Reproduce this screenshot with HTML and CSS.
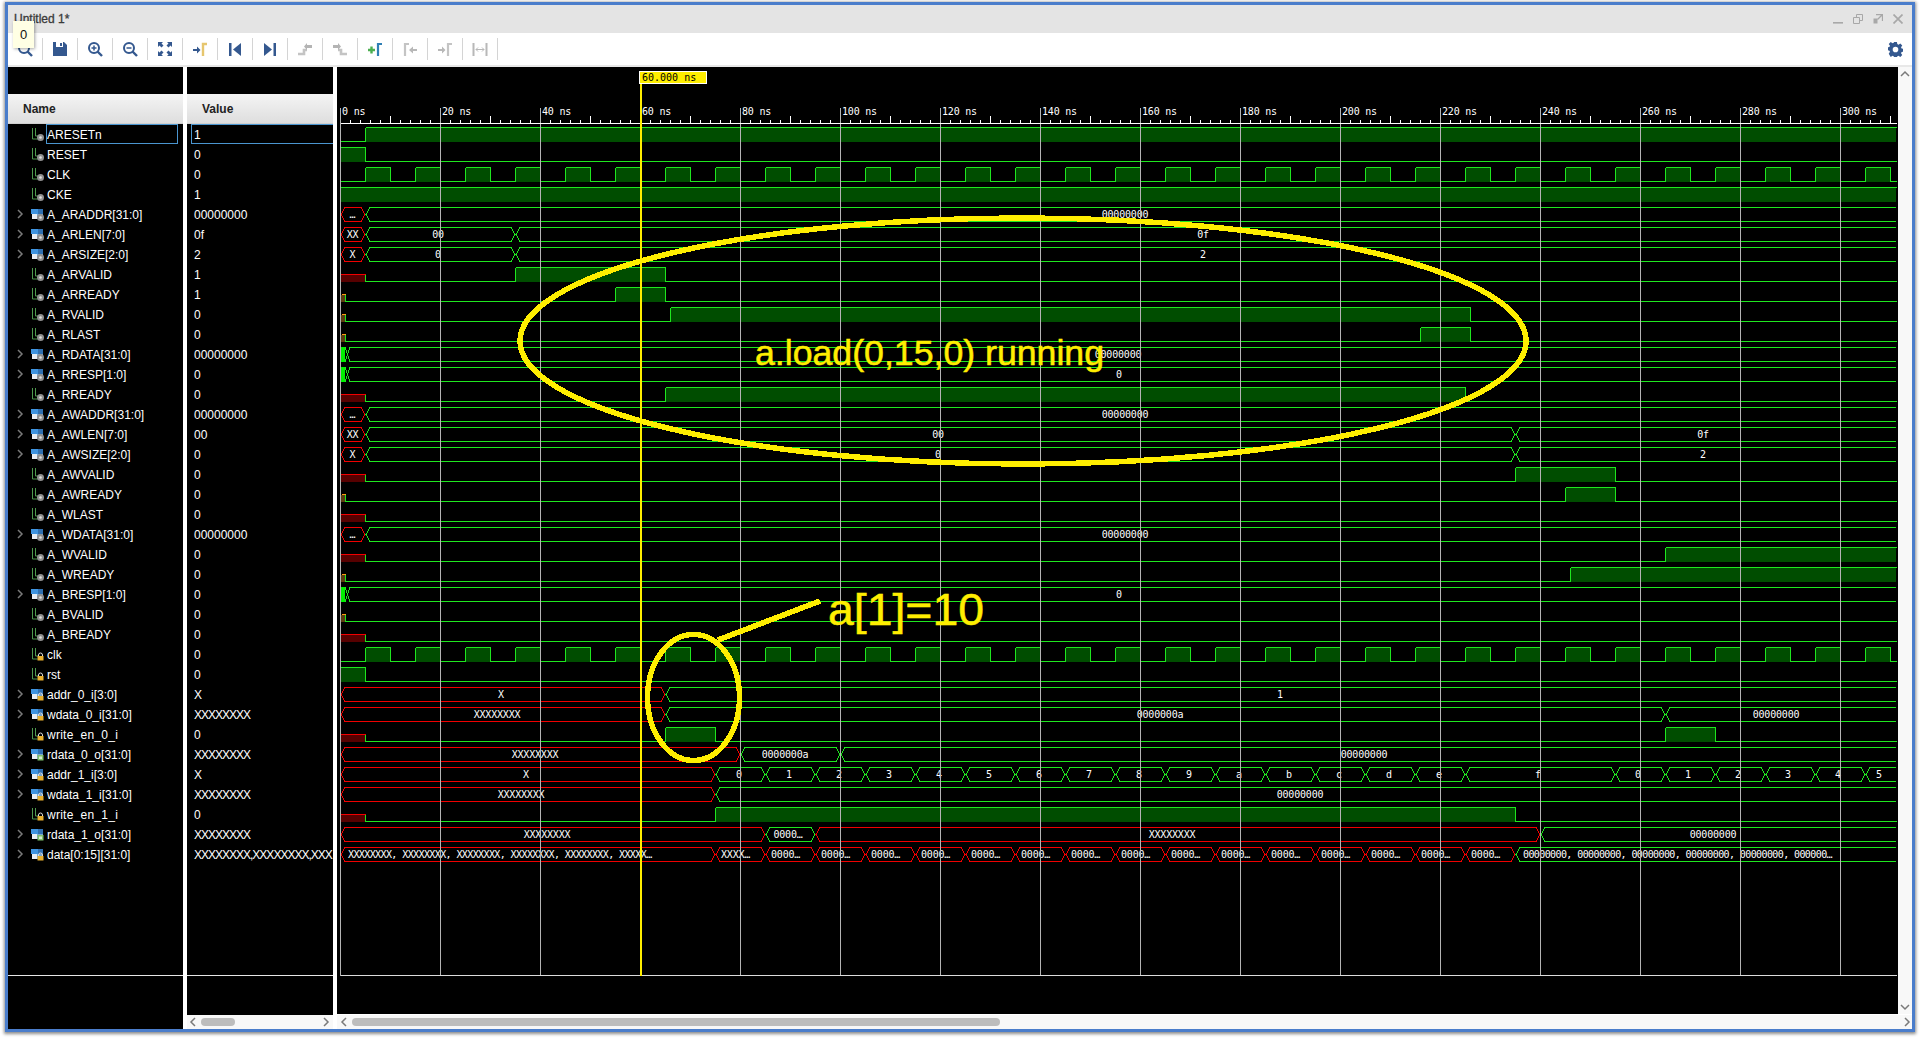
FILE: index.html
```html
<!DOCTYPE html>
<html lang="en">
<head>
<meta charset="utf-8">
<title>Untitled 1*</title>
<link rel="stylesheet" href="styles.css">
</head>
<body>
<svg class="defs" aria-hidden="true">
  <symbol id="badge-g" viewBox="0 0 16 16"><circle cx="9.500" cy="10.500" r="3.500" fill="#8f8f8f"/><circle cx="9.500" cy="10.500" r="1.300" fill="#e0e0e0"/></symbol>
  <symbol id="badge-l" viewBox="0 0 16 16"><path d="M7.500 9V8a2 2 0 0 1 4 0v1" fill="none" stroke="#ddd" stroke-width="1"/><rect x="6.500" y="9" width="6" height="4.500" fill="#e8b030"/></symbol>
  <symbol id="badge-o" viewBox="0 0 16 16"><rect x="6.500" y="8" width="6" height="5.500" fill="#7fbf6a"/><rect x="8" y="9.500" width="3" height="2.500" fill="#d5ecd0"/></symbol>
  <symbol id="trace" viewBox="0 0 16 16"><path d="M1.500 1v11h5M4.500 1v8h3" fill="none" stroke="#4f9a4f" stroke-width="1"/></symbol>
  <symbol id="bus" viewBox="0 0 16 16"><rect x="0" y="2" width="7" height="5" fill="#3f94e0"/><rect x="7" y="2" width="5" height="5" fill="#2f6fb0"/><rect x="1" y="7" width="5" height="5" fill="#e8eef5"/><rect x="6" y="7" width="6" height="5" fill="#7aa8d0"/></symbol>
  <symbol id="chev" viewBox="0 0 10 10"><path d="M3 1l4 4-4 4" fill="none" stroke="#7a7a7a" stroke-width="1.500"/></symbol>
  <symbol id="chev-l" viewBox="0 0 10 10"><path d="M7 1L3 5l4 4" fill="none" stroke="#7a7a7a" stroke-width="1.500"/></symbol>
  <symbol id="chev-u" viewBox="0 0 10 10"><path d="M1 7l4-4 4 4" fill="none" stroke="#7a7a7a" stroke-width="1.500"/></symbol>
  <symbol id="chev-d" viewBox="0 0 10 10"><path d="M1 3l4 4 4-4" fill="none" stroke="#7a7a7a" stroke-width="1.500"/></symbol>
</svg>

<div class="window">
  <div class="titlebar">
    <span class="title">Untitled 1*</span>
    <div class="win-btns">
      <svg class="win-ico" viewBox="0 0 10 10"><rect x="0" y="8" width="10" height="1.600" fill="#a8a8a8"/></svg>
      <svg class="win-ico" viewBox="0 0 10 10"><path d="M3.500 3V.5h6v6H7M.5 3.500h6v6h-6z" fill="none" stroke="#a8a8a8"/></svg>
      <svg class="win-ico" viewBox="0 0 10 10"><path d="M3 .5h6.500V7M9 1L4.500 5.500" fill="none" stroke="#a8a8a8" stroke-width="1.300"/><path d="M.5 4.500h4v5h-4z" fill="#a8a8a8"/></svg>
      <svg class="win-ico" viewBox="0 0 10 10"><path d="M.5.5l9 9M9.500.5l-9 9" fill="none" stroke="#a8a8a8" stroke-width="1.700"/></svg>
    </div>
  </div>

  <div class="toolbar">
    <div class="tool"><svg class="tb" viewBox="0 0 16 16"><circle cx="7" cy="7" r="5" fill="none" stroke="#34588f" stroke-width="2"/><path d="M10.500 10.500l4.500 4.500" stroke="#34588f" stroke-width="2.400"/></svg></div>
    <div class="tool"><svg class="tb" viewBox="0 0 16 16"><path d="M1 1h11l3 3v11H1z" fill="#34588f"/><rect x="4" y="1" width="7" height="5" fill="#fff"/><rect x="8" y="2" width="2" height="3" fill="#34588f"/></svg></div>
    <div class="tool"><svg class="tb" viewBox="0 0 16 16"><circle cx="7" cy="7" r="5" fill="none" stroke="#34588f" stroke-width="2"/><path d="M4.500 7h5M7 4.500v5" stroke="#34588f" stroke-width="1.500"/><path d="M10.500 10.500l4.500 4.500" stroke="#34588f" stroke-width="2.400"/></svg></div>
    <div class="tool"><svg class="tb" viewBox="0 0 16 16"><circle cx="7" cy="7" r="5" fill="none" stroke="#34588f" stroke-width="2"/><path d="M4.500 7h5" stroke="#34588f" stroke-width="1.500"/><path d="M10.500 10.500l4.500 4.500" stroke="#34588f" stroke-width="2.400"/></svg></div>
    <div class="tool"><svg class="tb" viewBox="0 0 16 16"><path d="M1 1h5L4.500 2.500 6.500 4.500 4.500 6.500 2.500 4.500 1 6zM15 1v5L13.500 4.500 11.500 6.500 9.500 4.500 11.500 2.500 10 1zM1 15v-5L2.500 11.500 4.500 9.500 6.500 11.500 4.500 13.500 6 15zM15 15h-5L11.500 13.500 9.500 11.500 11.500 9.500 13.500 11.500 15 10z" fill="#34588f"/></svg></div>
    <div class="tool"><svg class="tb" viewBox="0 0 16 16"><path d="M1 8h4V5.500L8.500 9 5 12.500V10H1z" fill="#34588f"/><path d="M11 15V3h4" fill="none" stroke="#e6c66e" stroke-width="2.400"/></svg></div>
    <div class="tool"><svg class="tb" viewBox="0 0 16 16"><rect x="2" y="2" width="2.500" height="13" fill="#34588f"/><path d="M14 2v13L6 8.500z" fill="#34588f"/></svg></div>
    <div class="tool"><svg class="tb" viewBox="0 0 16 16"><rect x="11.500" y="2" width="2.500" height="13" fill="#34588f"/><path d="M2 2v13l8-6.500z" fill="#34588f"/></svg></div>
    <div class="tool"><svg class="tb" viewBox="0 0 16 16"><path d="M1 13h6V9h3" fill="none" stroke="#c4c4c4" stroke-width="2.600"/><path d="M10 4h5v3h-5v2L7 5.500 10 2z" fill="#b4b4b4"/></svg></div>
    <div class="tool"><svg class="tb" viewBox="0 0 16 16"><path d="M15 13H9V9H6" fill="none" stroke="#c4c4c4" stroke-width="2.600"/><path d="M1 4h5V2l3 3.500L6 9V7H1z" fill="#b4b4b4"/></svg></div>
    <div class="tool"><svg class="tb" viewBox="0 0 16 16"><path d="M1 9h7M4.500 5.500v7" stroke="#4caf50" stroke-width="2.400"/><path d="M11 15V3h4" fill="none" stroke="#2f7fb5" stroke-width="2.200"/></svg></div>
    <div class="tool"><svg class="tb" viewBox="0 0 16 16"><path d="M3 15V3h4" fill="none" stroke="#c4c4c4" stroke-width="2.200"/><path d="M15 8h-4V5.500L7 9l4 3.500V10h4z" fill="#b8b8b8"/></svg></div>
    <div class="tool"><svg class="tb" viewBox="0 0 16 16"><path d="M1 8h4V5.500L8.500 9 5 12.500V10H1z" fill="#b8b8b8"/><path d="M11 15V3h4" fill="none" stroke="#c4c4c4" stroke-width="2.200"/></svg></div>
    <div class="tool"><svg class="tb" viewBox="0 0 16 16"><path d="M1.500 2v13M14.500 2v13" stroke="#b8b8b8" stroke-width="2"/><path d="M4 8.500h8M6 6.500L4 8.500l2 2M10 6.500l2 2-2 2" fill="none" stroke="#b8b8b8"/></svg></div>
    <svg class="gear" viewBox="0 0 16 16"><path fill-rule="evenodd" d="M6.500 0h3l.4 2.200 1.300.6L13.100 1.500l2.100 2.100-1.300 1.900.6 1.300 2.200.4v3l-2.200.4-.6 1.300 1.300 1.900-2.100 2.100-1.900-1.300-1.300.6-.4 2.200h-3l-.4-2.200-1.300-.6-1.900 1.300L.8 12.400l1.300-1.900-.6-1.300L-.7 8.800v-3l2.200-.4.600-1.300L.8 2.200 2.900.1l1.900 1.300 1.300-.6zM8 5a2.500 2.500 0 1 0 0 6 2.500 2.500 0 0 0 0-6z" fill="#34588f"/></svg>
  </div>

  <div class="tooltip">0</div>

  <div class="panes">
    <div class="col col-name">
      <div class="spacer"></div>
      <div class="head">Name</div>
      <div class="rows">
        <div class="row sel"><span class="exp"></span><span class="ic"><svg><use href="#trace"/></svg><svg><use href="#badge-g"/></svg></span><span class="name">ARESETn</span></div>
        <div class="row"><span class="exp"></span><span class="ic"><svg><use href="#trace"/></svg><svg><use href="#badge-g"/></svg></span><span class="name">RESET</span></div>
        <div class="row"><span class="exp"></span><span class="ic"><svg><use href="#trace"/></svg><svg><use href="#badge-g"/></svg></span><span class="name">CLK</span></div>
        <div class="row"><span class="exp"></span><span class="ic"><svg><use href="#trace"/></svg><svg><use href="#badge-g"/></svg></span><span class="name">CKE</span></div>
        <div class="row"><svg class="exp"><use href="#chev"/></svg><span class="ic"><svg><use href="#bus"/></svg><svg><use href="#badge-g"/></svg></span><span class="name">A_ARADDR[31:0]</span></div>
        <div class="row"><svg class="exp"><use href="#chev"/></svg><span class="ic"><svg><use href="#bus"/></svg><svg><use href="#badge-g"/></svg></span><span class="name">A_ARLEN[7:0]</span></div>
        <div class="row"><svg class="exp"><use href="#chev"/></svg><span class="ic"><svg><use href="#bus"/></svg><svg><use href="#badge-g"/></svg></span><span class="name">A_ARSIZE[2:0]</span></div>
        <div class="row"><span class="exp"></span><span class="ic"><svg><use href="#trace"/></svg><svg><use href="#badge-g"/></svg></span><span class="name">A_ARVALID</span></div>
        <div class="row"><span class="exp"></span><span class="ic"><svg><use href="#trace"/></svg><svg><use href="#badge-g"/></svg></span><span class="name">A_ARREADY</span></div>
        <div class="row"><span class="exp"></span><span class="ic"><svg><use href="#trace"/></svg><svg><use href="#badge-g"/></svg></span><span class="name">A_RVALID</span></div>
        <div class="row"><span class="exp"></span><span class="ic"><svg><use href="#trace"/></svg><svg><use href="#badge-g"/></svg></span><span class="name">A_RLAST</span></div>
        <div class="row"><svg class="exp"><use href="#chev"/></svg><span class="ic"><svg><use href="#bus"/></svg><svg><use href="#badge-g"/></svg></span><span class="name">A_RDATA[31:0]</span></div>
        <div class="row"><svg class="exp"><use href="#chev"/></svg><span class="ic"><svg><use href="#bus"/></svg><svg><use href="#badge-g"/></svg></span><span class="name">A_RRESP[1:0]</span></div>
        <div class="row"><span class="exp"></span><span class="ic"><svg><use href="#trace"/></svg><svg><use href="#badge-g"/></svg></span><span class="name">A_RREADY</span></div>
        <div class="row"><svg class="exp"><use href="#chev"/></svg><span class="ic"><svg><use href="#bus"/></svg><svg><use href="#badge-g"/></svg></span><span class="name">A_AWADDR[31:0]</span></div>
        <div class="row"><svg class="exp"><use href="#chev"/></svg><span class="ic"><svg><use href="#bus"/></svg><svg><use href="#badge-g"/></svg></span><span class="name">A_AWLEN[7:0]</span></div>
        <div class="row"><svg class="exp"><use href="#chev"/></svg><span class="ic"><svg><use href="#bus"/></svg><svg><use href="#badge-g"/></svg></span><span class="name">A_AWSIZE[2:0]</span></div>
        <div class="row"><span class="exp"></span><span class="ic"><svg><use href="#trace"/></svg><svg><use href="#badge-g"/></svg></span><span class="name">A_AWVALID</span></div>
        <div class="row"><span class="exp"></span><span class="ic"><svg><use href="#trace"/></svg><svg><use href="#badge-g"/></svg></span><span class="name">A_AWREADY</span></div>
        <div class="row"><span class="exp"></span><span class="ic"><svg><use href="#trace"/></svg><svg><use href="#badge-g"/></svg></span><span class="name">A_WLAST</span></div>
        <div class="row"><svg class="exp"><use href="#chev"/></svg><span class="ic"><svg><use href="#bus"/></svg><svg><use href="#badge-g"/></svg></span><span class="name">A_WDATA[31:0]</span></div>
        <div class="row"><span class="exp"></span><span class="ic"><svg><use href="#trace"/></svg><svg><use href="#badge-g"/></svg></span><span class="name">A_WVALID</span></div>
        <div class="row"><span class="exp"></span><span class="ic"><svg><use href="#trace"/></svg><svg><use href="#badge-g"/></svg></span><span class="name">A_WREADY</span></div>
        <div class="row"><svg class="exp"><use href="#chev"/></svg><span class="ic"><svg><use href="#bus"/></svg><svg><use href="#badge-g"/></svg></span><span class="name">A_BRESP[1:0]</span></div>
        <div class="row"><span class="exp"></span><span class="ic"><svg><use href="#trace"/></svg><svg><use href="#badge-g"/></svg></span><span class="name">A_BVALID</span></div>
        <div class="row"><span class="exp"></span><span class="ic"><svg><use href="#trace"/></svg><svg><use href="#badge-g"/></svg></span><span class="name">A_BREADY</span></div>
        <div class="row"><span class="exp"></span><span class="ic"><svg><use href="#trace"/></svg><svg><use href="#badge-l"/></svg></span><span class="name">clk</span></div>
        <div class="row"><span class="exp"></span><span class="ic"><svg><use href="#trace"/></svg><svg><use href="#badge-l"/></svg></span><span class="name">rst</span></div>
        <div class="row"><svg class="exp"><use href="#chev"/></svg><span class="ic"><svg><use href="#bus"/></svg><svg><use href="#badge-l"/></svg></span><span class="name">addr_0_i[3:0]</span></div>
        <div class="row"><svg class="exp"><use href="#chev"/></svg><span class="ic"><svg><use href="#bus"/></svg><svg><use href="#badge-l"/></svg></span><span class="name">wdata_0_i[31:0]</span></div>
        <div class="row"><span class="exp"></span><span class="ic"><svg><use href="#trace"/></svg><svg><use href="#badge-l"/></svg></span><span class="name wide">write_en_0_i</span></div>
        <div class="row"><svg class="exp"><use href="#chev"/></svg><span class="ic"><svg><use href="#bus"/></svg><svg><use href="#badge-o"/></svg></span><span class="name">rdata_0_o[31:0]</span></div>
        <div class="row"><svg class="exp"><use href="#chev"/></svg><span class="ic"><svg><use href="#bus"/></svg><svg><use href="#badge-l"/></svg></span><span class="name">addr_1_i[3:0]</span></div>
        <div class="row"><svg class="exp"><use href="#chev"/></svg><span class="ic"><svg><use href="#bus"/></svg><svg><use href="#badge-l"/></svg></span><span class="name">wdata_1_i[31:0]</span></div>
        <div class="row"><span class="exp"></span><span class="ic"><svg><use href="#trace"/></svg><svg><use href="#badge-l"/></svg></span><span class="name wide">write_en_1_i</span></div>
        <div class="row"><svg class="exp"><use href="#chev"/></svg><span class="ic"><svg><use href="#bus"/></svg><svg><use href="#badge-o"/></svg></span><span class="name">rdata_1_o[31:0]</span></div>
        <div class="row"><svg class="exp"><use href="#chev"/></svg><span class="ic"><svg><use href="#bus"/></svg><svg><use href="#badge-l"/></svg></span><span class="name">data[0:15][31:0]</span></div>
      </div>
      <div class="foot"></div>
    </div>

    <div class="sep"></div>

    <div class="col col-value">
      <div class="spacer"></div>
      <div class="head">Value</div>
      <div class="rows">
        <div class="val sel">1</div>
        <div class="val">0</div>
        <div class="val">0</div>
        <div class="val">1</div>
        <div class="val">00000000</div>
        <div class="val">0f</div>
        <div class="val">2</div>
        <div class="val">1</div>
        <div class="val">1</div>
        <div class="val">0</div>
        <div class="val">0</div>
        <div class="val">00000000</div>
        <div class="val">0</div>
        <div class="val">0</div>
        <div class="val">00000000</div>
        <div class="val">00</div>
        <div class="val">0</div>
        <div class="val">0</div>
        <div class="val">0</div>
        <div class="val">0</div>
        <div class="val">00000000</div>
        <div class="val">0</div>
        <div class="val">0</div>
        <div class="val">0</div>
        <div class="val">0</div>
        <div class="val">0</div>
        <div class="val">0</div>
        <div class="val">0</div>
        <div class="val xs">X</div>
        <div class="val xs">XXXXXXXX</div>
        <div class="val">0</div>
        <div class="val xs">XXXXXXXX</div>
        <div class="val xs">X</div>
        <div class="val xs">XXXXXXXX</div>
        <div class="val">0</div>
        <div class="val xs">XXXXXXXX</div>
        <div class="val xs">XXXXXXXX,XXXXXXXX,XXX</div>
      </div>
      <div class="foot foot-short"></div>
      <div class="hbar">
        <svg class="arrow"><use href="#chev-l"/></svg>
        <div class="thumb thumb-val"></div>
        <svg class="arrow arrow-end"><use href="#chev"/></svg>
      </div>
    </div>

    <div class="sep"></div>

    <div class="col col-wave">
      <div class="wave-main">
        <svg id="wave" class="wave" viewBox="337 67 1561 947"></svg>
        <div class="vbar">
          <svg class="arrow"><use href="#chev-u"/></svg>
          <svg class="arrow"><use href="#chev-d"/></svg>
        </div>
      </div>
      <div class="hbar hbar-wave">
        <svg class="arrow"><use href="#chev-l"/></svg>
        <div class="thumb thumb-wave"></div>
        <svg class="arrow arrow-end"><use href="#chev"/></svg>
      </div>
    </div>
  </div>
</div>
<script src="wave.js"></script>
</body>
</html>
```
FILE: styles.css
```css
* { box-sizing: border-box; }
html, body { margin: 0; padding: 0; height: 100%; background: #fff; overflow: hidden; }
body { font-family: "Liberation Sans", Arial, sans-serif; font-size: 12px; }
.defs { position: absolute; width: 0; height: 0; }

.window {
  position: relative;
  margin: 2px 5px 0 5px;
  width: 1910px;
  height: 1030px;
  border: 3px solid #4a7dcb;
  box-shadow: 0 1px 3px 1px rgba(0, 0, 0, .45);
  display: flex;
  flex-direction: column;
  background: #fff;
}

.titlebar {
  height: 28px;
  background: #e4e4e4;
  display: flex;
  align-items: center;
  justify-content: space-between;
  padding: 0 9px 0 6px;
}
.title { color: #3a3a3a; font-size: 12px; font-weight: normal; -webkit-text-stroke: .3px #3a3a3a; }
.win-btns { display: flex; gap: 10px; align-items: center; }
.win-ico { width: 10px; height: 10px; display: block; }

.toolbar {
  height: 34px;
  background: #fff;
  border-bottom: 2px solid #e8e8e8;
  display: flex;
  align-items: center;
}
.tool {
  width: 35px;
  height: 22px;
  border-right: 1px solid #d4d4d4;
  display: flex;
  align-items: center;
  justify-content: center;
  flex: none;
}
.tb { width: 16px; height: 16px; display: block; }
.gear { width: 15px; height: 15px; margin-left: auto; margin-right: 9px; display: block; }

.tooltip {
  position: absolute;
  left: 5px;
  top: 16px;
  width: 21px;
  height: 27px;
  background: #ffffe4;
  box-shadow: 1px 1px 3px rgba(0, 0, 0, .35);
  display: flex;
  align-items: center;
  justify-content: center;
  font-size: 13px;
  color: #111;
}

.panes { flex: 1; display: flex; background: #fff; min-height: 0; }
.sep { width: 4px; flex: none; background: #fff; }
.col { display: flex; flex-direction: column; background: #000; flex: none; }
.col-name { width: 175px; }
.col-value { width: 146px; }
.col-wave { flex: 1; min-width: 0; background: #f8f8f8; }

.spacer { height: 27px; flex: none; }
.head {
  height: 30px;
  flex: none;
  padding: 1px 0 0 15px;
  display: flex;
  align-items: center;
  font-weight: bold;
  color: #222;
  background: linear-gradient(#f4f4f4, #dedede);
  border-bottom: 1px solid #cfcfcf;
}
.rows { flex: 1; border-bottom: 1px solid #e6e6e6; min-height: 0; overflow: hidden; }
.foot { height: 53px; flex: none; }
.foot-short { height: 39px; }

.row { height: 20px; display: flex; align-items: center; color: #fff; white-space: nowrap; }
.exp { width: 10px; height: 10px; margin-left: 7px; margin-right: 6px; flex: none; display: block; }
.ic { position: relative; width: 16px; height: 16px; margin-top: 2px; flex: none; }
.ic svg { position: absolute; left: 0; top: 0; width: 16px; height: 16px; }
.name { padding-top: 2px; }
.name.wide { letter-spacing: .25px; }
.row.sel .name {
  width: 132px;
  height: 20px;
  line-height: 20px;
  padding-top: 0;
  margin-left: -1px;
  border: 1px solid #4a95cf;
}

.val {
  height: 20px;
  line-height: 22px;
  padding-left: 7px;
  color: #fff;
  white-space: nowrap;
  overflow: hidden;
}
.val.sel {
  margin-left: 4px;
  padding-left: 2px;
  line-height: 20px;
  border: 1px solid #4a95cf;
  border-right: 0;
}
.xs { letter-spacing: -1px; }

.hbar {
  height: 14px;
  flex: none;
  background: #f8f8f8;
  display: flex;
  align-items: center;
  padding: 0 2px 0 1px;
}
.hbar-wave { height: 15px; border-top: 1px solid #fff; padding-right: 0; }
.arrow { width: 10px; height: 10px; display: block; flex: none; }
.arrow-end { margin-left: auto; }
.thumb { height: 8px; border-radius: 4px; background: #bdbdbd; flex: none; }
.thumb-val { width: 34px; margin-left: 3px; }
.thumb-wave { width: 648px; margin-left: 3px; }
.hbar-wave .arrow:first-child { margin-left: 1px; }

.wave-main { flex: 1; display: flex; min-height: 0; }
.wave { width: 1561px; height: 947px; flex: none; background: #000; display: block; }
.vbar {
  width: 14px;
  flex: none;
  background: #f8f8f8;
  display: flex;
  flex-direction: column;
  justify-content: space-between;
  align-items: center;
  padding: 2px 0;
}
.wv-mono { font-family: "DejaVu Sans Mono", "Liberation Mono", monospace; font-size: 10px; fill: #fff; letter-spacing: -.2px; }
.wv-list { letter-spacing: -.6px; }
.wv-cursor { fill: #000; letter-spacing: 0; }
.wv-note { font-family: "Liberation Sans", Arial, sans-serif; fill: #ffee00; stroke: #ffee00; stroke-width: .5px; }
```
FILE: wave.js
```js
(function () {
  var END = 1896, TOP = 127, PITCH = 20, H = 14;
  var GREEN = '#1fe61f', RED = '#f00000', FILL = '#004d00';
  var out = [];

  function y(i) { return TOP + PITCH * i; }
  function line(x1, y1, x2, y2, c) {
    out.push('<path d="M' + (x1 + .5) + ' ' + (y1 + .5) + 'L' + (x2 + .5) + ' ' + (y2 + .5) + '" stroke="' + c + '"/>');
  }
  function rect(x, yy, w, h, c) {
    out.push('<rect x="' + x + '" y="' + yy + '" width="' + w + '" height="' + h + '" fill="' + c + '"/>');
  }
  function text(x, yy, s, anchor) {
    var cls = s.indexOf(',') >= 0 ? 'wv-mono wv-list' : 'wv-mono';
    out.push('<text class="' + cls + '" x="' + x + '" y="' + yy + '" text-anchor="' + (anchor || 'middle') + '">' + s + '</text>');
  }

  // one-bit signal: start = 'r' (red X), 'o' (orange U) or none
  function bit(i, start, highs) {
    var t = y(i), b = t + H, x = 340;
    if (start === 'r') {
      rect(340, t + 8, 25, 7, '#560000'); line(340, t + 7, 365, t + 7, RED); line(365, t + 7, 365, b, GREEN); x = 365;
    } else if (start === 'o') {
      rect(341, t + 8, 4, 7, '#5a3c10'); line(341, t + 7, 345, t + 7, '#ff9a10'); line(345, t + 7, 345, b, GREEN); x = 345;
    }
    highs.forEach(function (s) {
      var a = s[0], e = Math.min(s[1], END);
      if (a > x) line(x, b, a, b, GREEN);
      rect(a, t + 1, e - a, H, FILL);
      line(a, t, e, t, GREEN);
      if (a > 340) line(a, t, a, b, GREEN);
      if (e < END) line(e, t, e, b, GREEN);
      x = e;
    });
    if (x < END) line(x, b, END, b, GREEN);
  }

  // multi-bit signal: segments are [from, to, 'r'|'g', label, labelX, anchor]
  function bus(i, segs) {
    var t = y(i) + .5, m = y(i) + 7.5, b = y(i) + H + .5;
    segs.forEach(function (s) {
      var a = s[0], e = s[1], c = s[2] === 'r' ? RED : GREEN;
      var d = 'M' + (a + 5) + ' ' + t + ' L' + (a + 1) + ' ' + m + ' L' + (a + 5) + ' ' + b;
      if (e < END) {
        d += ' L' + (e - 4) + ' ' + b + ' L' + e + ' ' + m + ' L' + (e - 4) + ' ' + t + ' Z';
      } else {
        d += ' L' + e + ' ' + b + ' M' + (a + 5) + ' ' + t + ' L' + e + ' ' + t;
      }
      out.push('<path fill="none" stroke="' + c + '" d="' + d + '"/>');
      if (s[3]) text(s[4] !== undefined ? s[4] : (a + e) / 2, y(i) + 11, s[3], s[5]);
    });
  }

  // bus that opens with a short solid-green stub
  function busStub(i, label, lx) {
    var t = y(i), b = t + H;
    rect(341, t, 4, H + 1, '#00f000');
    out.push('<path fill="none" stroke="' + GREEN + '" d="M345 ' + (t + .5) + ' L350 ' + (b + .5) + ' L' + END + ' ' + (b + .5) + ' M345 ' + (b + .5) + ' L350 ' + (t + .5) + ' L' + END + ' ' + (t + .5) + '"/>');
    text(lx, t + 11, label);
  }

  function clock(i) {
    var h = [];
    for (var a = 365; a < END; a += 50) h.push([a, a + 25]);
    bit(i, null, h);
  }

  bit(0, null, [[365, END]]);
  bit(1, null, [[340, 365]]);
  clock(2);
  bit(3, null, [[340, END]]);
  bus(4, [[340, 365, 'r', '…'], [365, END, 'g', '00000000', 1125]]);
  bus(5, [[340, 365, 'r', 'XX'], [365, 515, 'g', '00', 438], [515, END, 'g', '0f', 1203]]);
  bus(6, [[340, 365, 'r', 'X'], [365, 515, 'g', '0', 438], [515, END, 'g', '2', 1203]]);
  bit(7, 'r', [[515, 665]]);
  bit(8, 'o', [[615, 665]]);
  bit(9, 'o', [[670, 1470]]);
  bit(10, 'o', [[1420, 1470]]);
  busStub(11, '00000000', 1118);
  busStub(12, '0', 1119);
  bit(13, 'r', [[665, 1465]]);
  bus(14, [[340, 365, 'r', '…'], [365, END, 'g', '00000000', 1125]]);
  bus(15, [[340, 365, 'r', 'XX'], [365, 1515, 'g', '00', 938], [1515, END, 'g', '0f', 1703]]);
  bus(16, [[340, 365, 'r', 'X'], [365, 1515, 'g', '0', 938], [1515, END, 'g', '2', 1703]]);
  bit(17, 'r', [[1515, 1615]]);
  bit(18, 'o', [[1565, 1615]]);
  bit(19, 'r', []);
  bus(20, [[340, 365, 'r', '…'], [365, END, 'g', '00000000', 1125]]);
  bit(21, 'r', [[1665, END]]);
  bit(22, 'o', [[1570, END]]);
  busStub(23, '0', 1119);
  bit(24, 'o', []);
  bit(25, 'r', []);
  clock(26);
  bit(27, null, [[340, 365]]);
  bus(28, [[340, 665, 'r', 'X', 501], [665, END, 'g', '1', 1280]]);
  bus(29, [[340, 665, 'r', 'XXXXXXXX', 497], [665, 1665, 'g', '0000000a', 1160], [1665, END, 'g', '00000000', 1776]]);
  bit(30, 'r', [[665, 715], [1665, 1715]]);
  bus(31, [[340, 740, 'r', 'XXXXXXXX', 535], [740, 840, 'g', '0000000a', 785], [840, END, 'g', '00000000', 1364]]);

  var addr = [[340, 715, 'r', 'X', 526]];
  '0123456789abcde'.split('').forEach(function (c, k) {
    addr.push([715 + 50 * k, 765 + 50 * k, 'g', c, 739 + 50 * k]);
  });
  addr.push([1465, 1615, 'g', 'f', 1538]);
  ['0', '1', '2', '3', '4'].forEach(function (c, k) {
    addr.push([1615 + 50 * k, 1665 + 50 * k, 'g', c, 1638 + 50 * k]);
  });
  addr.push([1865, END, 'g', '5', 1879]);
  bus(32, addr);

  bus(33, [[340, 715, 'r', 'XXXXXXXX', 521], [715, END, 'g', '00000000', 1300]]);
  bit(34, 'r', [[715, 1515]]);
  bus(35, [[340, 765, 'r', 'XXXXXXXX', 547], [765, 815, 'g', '0000…', 788], [815, 1540, 'r', 'XXXXXXXX', 1172], [1540, END, 'g', '00000000', 1713]]);

  var data = [[340, 715, 'r', 'XXXXXXXX, XXXXXXXX, XXXXXXXX, XXXXXXXX, XXXXXXXX, XXXXX…', 348, 'start'],
    [715, 765, 'r', 'XXXX…', 721, 'start']];
  for (var k = 0; k < 15; k++) {
    data.push([765 + 50 * k, 815 + 50 * k, 'r', '0000…', 771 + 50 * k, 'start']);
  }
  data.push([1515, END, 'g', '00000000, 00000000, 00000000, 00000000, 00000000, 000000…', 1523, 'start']);
  bus(36, data);

  // grid, axis, time labels
  for (var g = 0; g <= 300; g += 20) {
    var gx = 340 + 5 * g;
    line(gx, 107, gx, 975, '#b4b4b4');
    text(gx + 2, 115, g + ' ns', 'start');
  }
  line(340, 123, END, 123, '#fff');
  for (var tk = 350, n = 1; tk <= END; tk += 10, n++) {
    if (tk % 100 === 40) continue;
    line(tk, (n % 5 === 0) ? 115 : 119, tk, 123, '#fff');
  }
  line(340, 975, END, 975, '#dcdcdc');

  // cursor
  rect(640, 80, 2, 896, '#ffee00');
  rect(639, 71, 68, 13, '#fff');
  rect(640, 72, 66, 11, '#ffee00');
  out.push('<text class="wv-mono wv-cursor" x="642" y="81">60.000 ns</text>');

  var wave = document.getElementById('wave');
  wave.innerHTML =
    '<g shape-rendering="crispEdges" stroke-width="1">' + out.join('') + '</g>' +
    '<g fill="none" stroke="#ffee00" stroke-width="5.500" shape-rendering="crispEdges">' +
    '<ellipse cx="1023" cy="341" rx="503" ry="123"/>' +
    '<ellipse cx="693.500" cy="697.500" rx="46" ry="63"/>' +
    '<path d="M718 640L820 601"/></g>' +
    '<text class="wv-note" x="755" y="365" font-size="35" textLength="349" lengthAdjust="spacingAndGlyphs">a.load(0,15,0) running</text>' +
    '<text class="wv-note" x="828" y="625" font-size="45" textLength="156" lengthAdjust="spacingAndGlyphs">a[1]=10</text>';
})();
```
